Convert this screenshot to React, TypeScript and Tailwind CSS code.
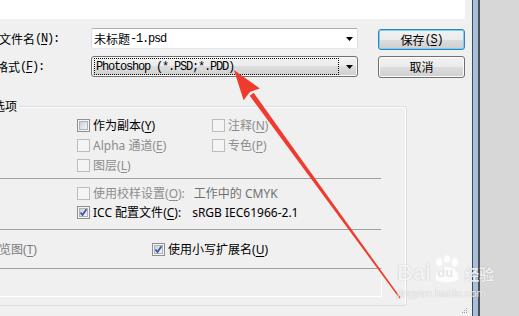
import React from 'react';

// 中文用 Noto Sans CJK，英文字母用等宽字体模拟宋体半角
const cjk = "font-['Noto_Sans_CJK_SC',sans-serif]";
const mono = "font-['Liberation_Mono',monospace] text-[12px] tracking-[-1.2px]";
const ui = "font-['Noto_Sans','Noto_Sans_CJK_SC',sans-serif] text-[12px] leading-[19px]";

type BoxState = 'off' | 'on' | 'dis';

function Check({ state }: { state: BoxState }) {
  if (state === 'dis') {
    return <div className="w-[13px] h-[13px] shrink-0 border border-[#bcbcbc] bg-[#f4f4f4]" />;
  }
  return (
    <div className="w-[13px] h-[13px] shrink-0 border border-[#8e8f8f] bg-[#f4f4f4] p-px">
      <div className="relative w-full h-full border border-[#aeb3b9] bg-gradient-to-br from-[#cbcfd5] to-[#f6f6f6]">
        {state === 'on' && (
          <svg viewBox="0 0 9 9" className="absolute left-[-1px] top-[-1px] w-[9px] h-[9px]">
            <path d="M1.5 4.5 L3.5 7 L7.5 1.2" fill="none" stroke="#3b5aa8" strokeWidth="1.8" />
          </svg>
        )}
      </div>
    </div>
  );
}

function Key({ k }: { k: string }) {
  return (
    <>
      (<span className="underline underline-offset-2">{k}</span>)
    </>
  );
}

function Opt({ state, dim, children }: { state: BoxState; dim?: boolean; children: React.ReactNode }) {
  return (
    <div className="flex items-center h-[19px] gap-[3px]">
      <Check state={state} />
      <span className={`${ui} whitespace-nowrap ${dim ? 'text-[#8d8d8d]' : 'text-black'}`}>{children}</span>
    </div>
  );
}

function Arrow() {
  return (
    <svg width="7" height="4" viewBox="0 0 7 4" className="shrink-0">
      <polygon points="0,0 7,0 3.5,4" fill="#000" />
    </svg>
  );
}

const btn =
  "flex items-center justify-center w-[87px] rounded-[3px] border bg-[linear-gradient(#f2f2f2,#ebebeb_50%,#dddddd_50%,#cfcfcf)] text-[12px] text-black";

export default function App() {
  return (
    <div className="relative w-[519px] h-[316px] overflow-hidden flex bg-[#f0f0f0]">
      {/* 对话框主体 */}
      <div className="w-[472px] shrink-0 flex flex-col">
        <div className="w-[465px] h-[19px] bg-white" />

        {/* 文件名 */}
        <div className="flex items-start mt-[9px] h-[21px]">
          <div className={`w-[91px] h-[21px] flex items-center ${cjk} text-[12px] whitespace-nowrap`}>
            <span className="ml-[-1px]">文件名</span>
            <span className={mono}>
              <Key k="N" />:
            </span>
          </div>
          <div className="w-[267px] h-[21px] flex items-center bg-white border border-[#dbdfe6] border-t-[#abadb3] border-b-[#e3e9ef] rounded-[2px] pl-[2px] pr-[4px]">
            <span className={`${cjk} text-[12px]`}>未标题</span>
            <span className={mono}>-1.psd</span>
            <div className="flex-1" />
            <Arrow />
          </div>
          <div className={`${btn} ${cjk} ml-[20px] mt-px h-[21px] border-[#3c7fb1] shadow-[inset_0_0_0_1px_#6fd4fb]`}>
            保存<span className={mono}><Key k="S" /></span>
          </div>
        </div>

        {/* 格式 */}
        <div className="flex items-start mt-[7px] h-[22px]">
          <div className={`w-[91px] h-[21px] flex items-center ${cjk} text-[12px] whitespace-nowrap`}>
            <span className="ml-[-4px]">格式</span>
            <span className={mono}>
              <Key k="F" />:
            </span>
          </div>
          <div className="w-[267px] h-[21px] flex items-center rounded-[3px] border border-[#707070] bg-[linear-gradient(#f2f2f2,#ebebeb_50%,#dddddd_50%,#cfcfcf)] shadow-[inset_0_0_0_1px_#fafafa] pl-[2px] pr-[4px]">
            <div className={`w-[245px] h-[17px] flex items-center border border-dotted border-black pl-px ${mono} whitespace-nowrap`}>
              Photoshop (*.PSD;*.PDD)
            </div>
            <div className="flex-1" />
            <Arrow />
          </div>
          <div className={`${btn} ${cjk} ml-[20px] h-[22px] border-[#707070] shadow-[inset_0_0_0_1px_#fcfcfc]`}>
            取消
          </div>
        </div>

        {/* 选项 */}
        <div className="relative mt-[28px] w-[407px] h-[200px] border border-l-0 border-[#d5dfe5] rounded-r-[3px] shadow-[inset_-1px_1px_0_#fff] flex flex-col">
          <span className={`absolute left-[-7px] top-[-10px] pr-[3px] bg-[#f0f0f0] ${ui} text-black`}>选项</span>

          <div className="h-[71px] pt-[9px] pl-[77px] grid grid-cols-[135px_auto] gap-y-px content-start">
            <Opt state="off">作为副本<Key k="Y" /></Opt>
            <Opt state="dis" dim>注释<Key k="N" /></Opt>
            <Opt state="dis" dim>Alpha 通道<Key k="E" /></Opt>
            <Opt state="dis" dim>专色<Key k="P" /></Opt>
            <Opt state="dis" dim>图层<Key k="L" /></Opt>
          </div>
          <div className="w-[381px] h-px bg-[#a0a0a0]" />

          <div className="h-[50px] pt-[5px] pl-[77px] flex flex-col">
            <Opt state="dis" dim>
              使用校样设置<Key k="O" />:<span className="ml-[9px] text-[#707070]">工作中的 CMYK</span>
            </Opt>
            <Opt state="on">
              ICC 配置文件<Key k="C" />:<span className="ml-[11px]">sRGB IEC61966-2.1</span>
            </Opt>
          </div>
          <div className="w-[381px] h-px bg-[#a0a0a0]" />

          <div className="h-[38px] pt-[10px] flex items-start">
            <span className={`${ui} ml-[-13px] w-[165px] text-[#7b7b7b] whitespace-nowrap`}>
              缩览图<Key k="T" />
            </span>
            <Opt state="on">使用小写扩展名<Key k="U" /></Opt>
          </div>

          <div className="w-[382px] h-[29px] border-t border-t-[#a0a0a0] border-r border-b border-white" />
        </div>

        <div className="flex-1 flex justify-end items-end pr-[4px] pb-[2px]">
          <svg width="6" height="6" viewBox="0 0 6 6">
            <rect x="4" y="0" width="1" height="1" fill="#a0a0a0" />
            <rect x="2" y="2" width="1" height="1" fill="#a0a0a0" />
            <rect x="4" y="2" width="1" height="1" fill="#a0a0a0" />
            <rect x="0" y="4" width="1" height="1" fill="#a0a0a0" />
            <rect x="2" y="4" width="1" height="1" fill="#a0a0a0" />
            <rect x="4" y="4" width="1" height="1" fill="#a0a0a0" />
          </svg>
        </div>
      </div>

      {/* 窗口右边框 */}
      <div className="w-px bg-[#404b58]" />
      <div className="w-[5px] bg-[#a7c0dd]" />
      <div className="w-[2px] bg-[#4d4f52]" />
      <div className="flex-1 bg-[#d7d7d7]" />

      {/* 红色箭头 */}
      <svg className="absolute left-0 top-0 pointer-events-none" width="519" height="316" viewBox="0 0 519 316">
        <polygon points="253.7,92.8 400.5,297.6 399.5,298.4 249.7,95.8" fill="#ef3b2d" />
        <polygon points="234,70 259.8,88.4 249.9,91.9 243.6,100.2" fill="#ef3b2d" />
      </svg>

      {/* 百度经验水印 */}
      <div className="absolute left-[397px] top-[255px] flex flex-col pointer-events-none text-white/85 [text-shadow:0_0_1px_rgba(0,0,0,0.3)]">
        <div className="flex items-end h-[29px]">
          <span className="font-['Liberation_Sans',sans-serif] font-bold text-[22px] leading-[22px]">Bai</span>
          <div className="relative w-[32px] h-[29px]">
            <svg viewBox="0 0 30 28" className="absolute inset-0 w-[32px] h-[29px]">
              <ellipse cx="7.5" cy="7" rx="3" ry="4" fill="rgba(255,255,255,0.85)" />
              <ellipse cx="15" cy="3.8" rx="3" ry="3.6" fill="rgba(255,255,255,0.85)" />
              <ellipse cx="22.5" cy="7" rx="3" ry="4" fill="rgba(255,255,255,0.85)" />
              <path d="M4 24 Q3 13 15 11 Q27 13 26 24 Q15 29 4 24Z" fill="rgba(255,255,255,0.85)" />
            </svg>
            <span className="absolute left-[6px] top-[11px] font-['Liberation_Sans',sans-serif] font-bold text-[13px] leading-[14px] text-[#e6e6e6] [text-shadow:none]">du</span>
          </div>
          <span className={`${cjk} font-bold text-[15px] leading-[20px] ml-px`}>经验</span>
        </div>
        <span className="font-['Liberation_Sans',sans-serif] text-[11px] leading-[14px] mt-[2px]">jingyan.baidu.com</span>
      </div>
    </div>
  );
}
